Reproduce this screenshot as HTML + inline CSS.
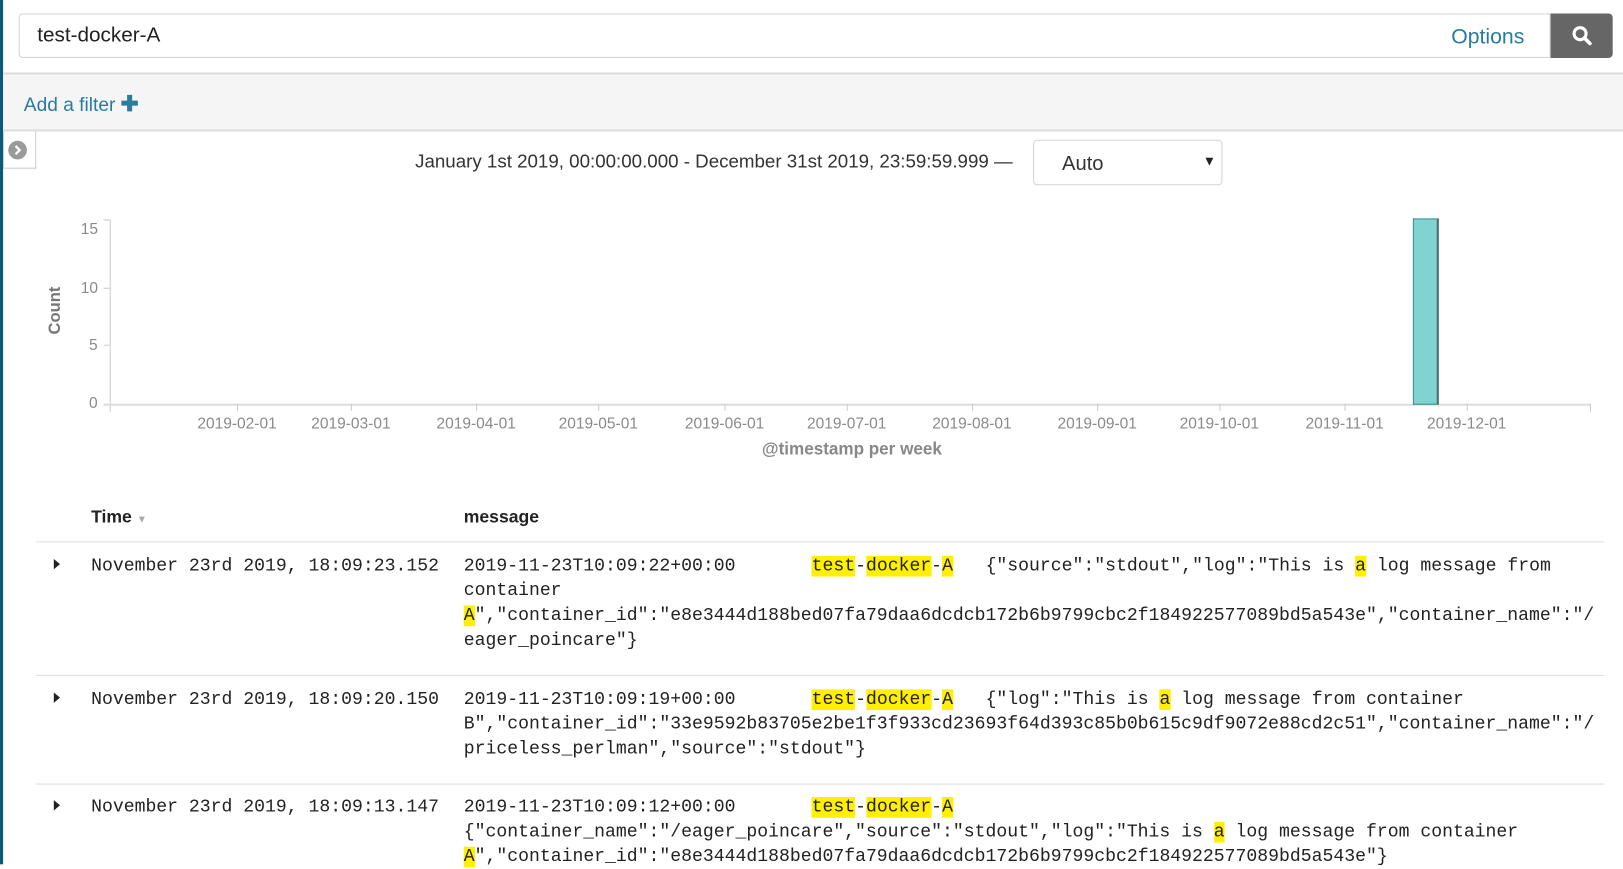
<!DOCTYPE html>
<html><head><meta charset="utf-8"><style>
html,body{margin:0;padding:0;background:#fff;overflow:hidden;width:1623px;height:864px}
#w{position:absolute;left:0;top:0;width:1568px;height:835px;transform:scale(1.0351);transform-origin:0 0;font-family:"Liberation Sans",sans-serif;color:#333}
.a{position:absolute}
.m{font-family:"Liberation Mono",monospace;font-size:17.5px;line-height:24px;white-space:pre;color:#222}
.h{background:#ffef00}
.tl{font-size:15px;color:#8a8a8a;position:absolute;top:401px;transform:translateX(-50%)}
.tk{position:absolute;top:390px;width:1px;height:7px;background:#ccc}
.row{position:absolute;left:35px;width:1515px;height:1px;background:#ddd}
.tri{position:absolute;left:52px;width:0;height:0;border-left:6px solid #222;border-top:5px solid transparent;border-bottom:5px solid transparent}
</style></head><body><div id="w">
<div class="a" style="left:0;top:0;width:3px;height:835px;background:#0b5a7c"></div>
<div class="a" style="left:18px;top:13px;width:1478px;height:41px;border:1px solid #d4d4d4;border-radius:4px 0 0 4px"></div>
<div class="a" style="left:36px;top:23px;font-size:20px;color:#222">test-docker-A</div>
<div class="a" style="left:1402px;top:24px;font-size:20.5px;color:#2b7b9e">Options</div>
<div class="a" style="left:1498px;top:13px;width:60px;height:43px;background:#666;border-radius:0 4px 4px 0"></div>
<svg class="a" style="left:1518px;top:24px" width="21" height="21" viewBox="0 0 21 21"><circle cx="8.5" cy="8.5" r="5.8" fill="none" stroke="#fff" stroke-width="3"/><line x1="13" y1="13" x2="18" y2="18" stroke="#fff" stroke-width="3.5" stroke-linecap="round"/></svg>
<div class="a" style="left:3px;top:70px;width:1565px;height:57px;background:#f5f5f5;border-top:2px solid #ddd;border-bottom:2px solid #ddd;box-sizing:border-box"></div>
<div class="a" style="left:23px;top:90px;font-size:18.5px;color:#2b7b9e">Add a filter <b style="font-size:21px;line-height:18px">✚</b></div>
<div class="a" style="left:3px;top:127px;width:32px;height:36px;border:1px solid #ccc;border-top:none;box-sizing:border-box;background:#fff"></div>
<svg class="a" style="left:7px;top:135px" width="20" height="20"><circle cx="10" cy="10" r="9" fill="#9a9a9a"/><path d="M8 6l4 4-4 4" stroke="#fff" stroke-width="2.2" fill="none"/></svg>
<div class="a" style="left:401px;top:146px;font-size:18.1px;color:#333">January 1st 2019, 00:00:00.000 - December 31st 2019, 23:59:59.999 —</div>
<div class="a" style="left:998px;top:135px;width:183px;height:44px;border:1px solid #d4d4d4;border-radius:4px;box-sizing:border-box"></div>
<div class="a" style="left:1026px;top:147px;font-size:19.5px;color:#333">Auto</div>
<div class="a" style="left:1162px;top:148px;font-size:13px;color:#222">▼</div>
<!-- chart -->
<div class="a" style="left:106px;top:212px;width:1px;height:186px;background:#ccc"></div>
<div class="a" style="left:100px;top:390px;width:1437px;height:2px;background:#ddd"></div>
<div class="a" style="left:1536px;top:390px;width:1px;height:8px;background:#ccc"></div>
<div class="a" style="left:100px;top:212px;width:6px;height:1px;background:#ccc"></div>
<div class="a" style="left:100px;top:278px;width:6px;height:1px;background:#ccc"></div>
<div class="a" style="left:100px;top:333px;width:6px;height:1px;background:#ccc"></div>
<div class="a" style="left:78px;top:213px;font-size:15px;color:#8a8a8a">15</div>
<div class="a" style="left:78px;top:270px;font-size:15px;color:#8a8a8a">10</div>
<div class="a" style="left:86px;top:325px;font-size:15px;color:#8a8a8a">5</div>
<div class="a" style="left:86px;top:381px;font-size:15px;color:#8a8a8a">0</div>
<div class="a" style="left:31px;top:291px;font-size:16px;font-weight:bold;color:#777;transform:rotate(-90deg);transform-origin:center">Count</div>
<div class="a" style="left:1365px;top:211px;width:22px;height:178px;background:#7fd3d0;border:1px solid #3c8c8a;border-right:2px solid #4a6f6e"></div>
<div class="tk" style="left:229px"></div><div class="tl" style="left:229px">2019-02-01</div>
<div class="tk" style="left:339px"></div><div class="tl" style="left:339px">2019-03-01</div>
<div class="tk" style="left:460px"></div><div class="tl" style="left:460px">2019-04-01</div>
<div class="tk" style="left:578px"></div><div class="tl" style="left:578px">2019-05-01</div>
<div class="tk" style="left:700px"></div><div class="tl" style="left:700px">2019-06-01</div>
<div class="tk" style="left:818px"></div><div class="tl" style="left:818px">2019-07-01</div>
<div class="tk" style="left:939px"></div><div class="tl" style="left:939px">2019-08-01</div>
<div class="tk" style="left:1060px"></div><div class="tl" style="left:1060px">2019-09-01</div>
<div class="tk" style="left:1178px"></div><div class="tl" style="left:1178px">2019-10-01</div>
<div class="tk" style="left:1299px"></div><div class="tl" style="left:1299px">2019-11-01</div>
<div class="tk" style="left:1417px"></div><div class="tl" style="left:1417px">2019-12-01</div>
<div class="a" style="left:823px;top:425px;transform:translateX(-50%);font-size:16.5px;font-weight:bold;color:#888">@timestamp per week</div>
<!-- table -->
<div class="a" style="left:88px;top:490px;font-size:17px;font-weight:bold;color:#222">Time <span style="font-size:10px;color:#aaa">▼</span></div>
<div class="a" style="left:448px;top:490px;font-size:17px;font-weight:bold;color:#222">message</div>
<div class="row" style="top:523px"></div>
<div class="row" style="top:652px"></div>
<div class="row" style="top:757px"></div>
<div class="tri" style="top:540px"></div>
<div class="tri" style="top:669px"></div>
<div class="tri" style="top:773px"></div>
<div class="a m" style="left:88px;top:535px">November 23rd 2019, 18:09:23.152</div>
<div class="a m" style="left:88px;top:664px">November 23rd 2019, 18:09:20.150</div>
<div class="a m" style="left:88px;top:768px">November 23rd 2019, 18:09:13.147</div>
<div class="a m" style="left:448px;top:535px">2019-11-23T10:09:22+00:00       <span class="h">test</span>-<span class="h">docker</span>-<span class="h">A</span>   {"source":"stdout","log":"This is <span class="h">a</span> log message from
container
<span class="h">A</span>","container_id":"e8e3444d188bed07fa79daa6dcdcb172b6b9799cbc2f184922577089bd5a543e","container_name":"/
eager_poincare"}</div>
<div class="a m" style="left:448px;top:664px">2019-11-23T10:09:19+00:00       <span class="h">test</span>-<span class="h">docker</span>-<span class="h">A</span>   {"log":"This is <span class="h">a</span> log message from container
B","container_id":"33e9592b83705e2be1f3f933cd23693f64d393c85b0b615c9df9072e88cd2c51","container_name":"/
priceless_perlman","source":"stdout"}</div>
<div class="a m" style="left:448px;top:768px">2019-11-23T10:09:12+00:00       <span class="h">test</span>-<span class="h">docker</span>-<span class="h">A</span>
{"container_name":"/eager_poincare","source":"stdout","log":"This is <span class="h">a</span> log message from container
<span class="h">A</span>","container_id":"e8e3444d188bed07fa79daa6dcdcb172b6b9799cbc2f184922577089bd5a543e"}</div>
</div></body></html>
